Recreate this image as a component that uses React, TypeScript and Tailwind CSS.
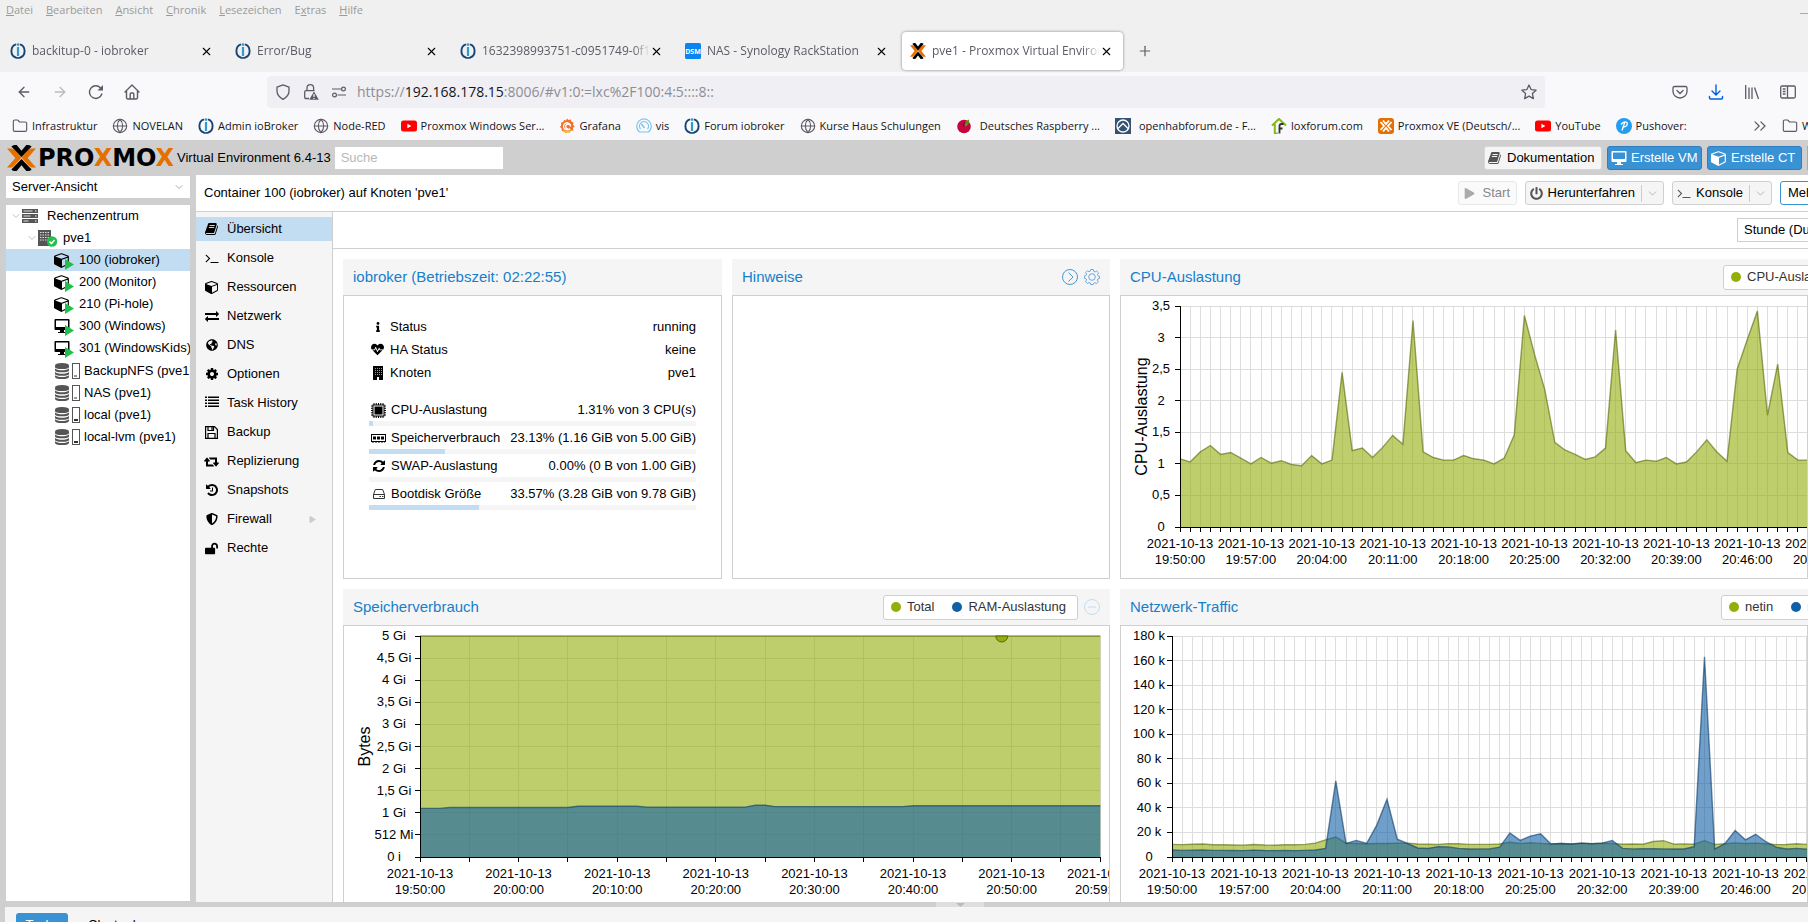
import type { ReactNode } from 'react';
import { ArrowLeft, ArrowRight, ChevronDown, ChevronsRight, Folder, Globe, Plus, X } from 'lucide-react';
import { FaGlobeAmericas, FaHeartbeat, FaInfo, FaLockOpen, FaPlay, FaPowerOff, FaShieldAlt } from 'react-icons/fa';

/* ---------- icons ---------- */

const FaGlyph = ({ d, size = 14, box = '0 0 1792 1792', className }: { d: string; size?: number; box?: string; className?: string }) => (
  <svg width={size} height={size} viewBox={box} fill="currentColor" className={className}>
    <path d={d} />
  </svg>
);

const CUBE =
  'M896 1629l640-349v-636l-640 233v752zm-64-865l698-254-698-254-698 254zm832-252v768q0 35-18 65t-49 47l-704 384q-28 16-61 16t-61-16l-704-384q-31-17-49-47t-18-65v-768q0-40 23-73t61-47l704-256q22-8 44-8t44 8l704 256q38 14 61 47t23 73z';
const BOOK =
  'M1639 478q40 57 18 129l-275 906q-19 64-76.5 107.5t-122.5 43.5h-923q-77 0-148.5-53.5t-99.5-131.5q-24-67-2-127 0-4 3-27t4-37q1-8-3-21.5t-3-19.5q2-11 8-21t16.5-23.5 16.5-23.5q23-38 45-91.5t30-91.5q3-10 .5-30t-.5-28q3-11 17-28t17-23q21-36 42-92t25-90q1-9-2.5-32t.5-28q4-13 22-30.5t22-22.5q19-26 42.5-84.5t27.5-96.5q1-8-3-25.5t-2-26.5q2-8 9-18t18-23 17-21q8-12 16.5-30.5t15-35 16-36 19.5-32 26.5-23.5 36-11.5 47.5 5.5l-1 3q38-9 51-9h761q74 0 114 56t18 130l-274 906q-36 119-71.5 153.5t-128.5 34.5h-869q-27 0-38 15-11 16-1 43 24 70 144 70h923q29 0 56-15.5t35-41.5l300-987q7-22 5-57 38 15 59 43zm-1064 2q-4 13 2 22.5t20 9.5h608q13 0 25.5-9.5t16.5-22.5l21-64q4-13-2-22.5t-20-9.5h-608q-13 0-25.5 9.5t-16.5 22.5zm-83 256q-4 13 2 22.5t20 9.5h608q13 0 25.5-9.5t16.5-22.5l21-64q4-13-2-22.5t-20-9.5h-608q-13 0-25.5 9.5t-16.5 22.5z';
const TERMINAL =
  'M649 983l-466 466q-10 10-23 10t-23-10l-50-50q-10-10-10-23t10-23l393-393-393-393q-10-10-10-23t10-23l50-50q10-10 23-10t23 10l466 466q10 10 10 23t-10 23zm1079 457v64q0 14-9 23t-23 9h-960q-14 0-23-9t-9-23v-64q0-14 9-23t23-9h960q14 0 23 9t9 23z';
const EXCHANGE =
  'M1792 1184v192q0 13-9.5 22.5t-22.5 9.5h-1376v192q0 13-9.5 22.5t-22.5 9.5q-12 0-24-10l-319-320q-9-9-9-22 0-14 9-23l320-320q9-9 23-9 13 0 22.5 9.5t9.5 22.5v192h1376q13 0 22.5 9.5t9.5 22.5zm0-544q0 14-9 23l-320 320q-9 9-23 9-13 0-22.5-9.5t-9.5-22.5v-192h-1376q-13 0-22.5-9.5t-9.5-22.5v-192q0-13 9.5-22.5t22.5-9.5h1376v-192q0-14 9-23t23-9q12 0 24 10l319 319q9 9 9 23z';
const LIST =
  'M0 1216h256v192h-256zM0 832h256v192h-256zM384 1216h1408v192h-1408zM0 448h256v192h-256zM384 832h1408v192h-1408zM0 64h256v192h-256zM384 448h1408v192h-1408zM384 64h1408v192h-1408z';
const COG =
  'M1152 896q0-106-75-181t-181-75-181 75-75 181 75 181 181 75 181-75 75-181zm512-109v222q0 12-8 23t-20 13l-185 28q-19 54-39 91 35 50 107 138 10 12 10 25t-9 23q-27 37-99 108t-94 71q-12 0-26-9l-138-108q-44 23-91 38-16 136-29 186-7 28-36 28h-222q-14 0-24.5-8.5t-11.5-21.5l-28-184q-49-16-90-37l-141 107q-10 9-25 9-14 0-25-11-126-114-165-168-7-10-7-23 0-12 8-23 15-21 51-66.5t54-70.5q-27-50-41-99l-183-27q-13-2-21-12.5t-8-23.5v-222q0-12 8-23t19-13l186-28q14-46 39-92-40-57-107-138-10-12-10-24 0-10 9-23 26-36 98.5-107.5t94.5-71.5q13 0 26 10l138 107q44-23 91-38 16-136 29-186 7-28 36-28h222q14 0 24.5 8.5t11.5 21.5l28 184q49 16 90 37l142-107q9-9 24-9 13 0 25 10 129 119 165 170 7 8 7 22 0 12-8 23-15 21-51 66.5t-54 70.5q26 50 41 98l183 28q13 2 21 12.5t8 23.5z';
const HISTORY =
  'M1664 896q0 156-61 298t-164 245-245 164-298 61q-172 0-327-72.5t-264-204.5q-7-10-6.5-22.5t8.5-20.5l137-138q10-9 25-9 16 2 23 12 73 95 179 147t225 52q104 0 198.5-40.5t163.5-109.5 109.5-163.5 40.5-198.5-40.5-198.5-109.5-163.5-163.5-109.5-198.5-40.5q-98 0-188 35.5t-160 101.5l137 138q31 30 14 69-17 40-59 40h-448q-26 0-45-19t-19-45v-448q0-42 40-59 39-17 69 14l130 129q107-101 244.5-156.5t284.5-55.5q156 0 298 61t245 164 164 245 61 298zm-640-288v448q0 14-9 23t-23 9h-320q-14 0-23-9t-9-23v-64q0-14 9-23t23-9h224v-352q0-14 9-23t23-9h64q14 0 23 9t9 23z';
const REFRESH =
  'M1639 1056q0 5-1 7-64 268-268 434.5t-478 166.5q-146 0-282.5-55t-243.5-157l-129 129q-19 19-45 19t-45-19-19-45v-448q0-26 19-45t45-19h448q26 0 45 19t19 45-19 45l-137 137q71 66 161 102t187 36q134 0 250-65t186-179q11-17 53-117 8-23 30-23h192q13 0 22.5 9.5t9.5 22.5zm25-800v448q0 26-19 45t-45 19h-448q-26 0-45-19t-19-45 19-45l138-138q-148-137-349-137-134 0-250 65t-186 179q-11 17-53 117-8 23-30 23h-199q-13 0-22.5-9.5t-9.5-22.5v-7q65-268 270-434.5t480-166.5q146 0 284 55.5t245 156.5l130-129q19-19 45-19t45 19 19 45z';
const RETWEET =
  'M1280 1504q0 13-9.5 22.5t-22.5 9.5h-960q-8 0-13.5-2t-9-7-5.5-8-3-11.5-1-11.5v-600h-192q-26 0-45-19t-19-45q0-24 15-41l320-384q19-22 49-22t49 22l320 384q15 17 15 41 0 26-19 45t-45 19h-192v384h576q16 0 25 11l160 192q7 10 7 21zm640-416q0 24-15 41l-320 384q-20 23-49 23t-49-23l-320-384q-15-17-15-41 0-26 19-45t45-19h192v-384h-576q-16 0-25-12l-160-192q-7-9-7-20 0-13 9.5-22.5t22.5-9.5h960q8 0 13.5 2t9 7 5.5 8 3 11.5 1 11.5v600h192q26 0 45 19t19 45z';

const IoBrokerIcon = () => (
  <svg width="16" height="16" viewBox="0 0 16 16" fill="none">
    <path d="M6 1.4A6.500 6.900 0 0 0 6 14.600M10 1.4A6.500 6.900 0 0 1 10 14.600" stroke="#174475" strokeWidth="1.900" />
    <path d="M5.500 14.500Q8 15.500 10.500 14.500" stroke="#174475" strokeWidth="1.500" />
    <path d="M8 4V13" stroke="#3399cc" strokeWidth="2.200" />
    <circle cx="8" cy="1.600" r="1.400" fill="#3399cc" />
  </svg>
);

const DsmIcon = () => (
  <svg width="16" height="16" viewBox="0 0 16 16">
    <rect width="16" height="16" rx="1.5" fill="#0a84f0" />
    <text x="8" y="11" textAnchor="middle" fontSize="7" fontWeight="700" fill="#fff">
      DSM
    </text>
  </svg>
);

const ProxmoxMark = ({ width = 16, height = 16 }: { width?: number; height?: number }) => (
  <svg width={width} height={height} viewBox="0 0 30 26" preserveAspectRatio="none">
    <path d="M0 3.5h5l3 1.5 7 7.6-7 7.6-3 2.3H0l8.6-9.5z" fill="#e57000" />
    <path d="M30 3.5h-5l-3 1.5-7 7.6 7 7.6 3 2.3h5l-8.6-9.5z" fill="#e57000" />
    <path d="M4.5 1.5Q6 0 8 0h2l5 5.7L20 0h2q2 0 3.500 1.500L15 12z" fill="#000" />
    <path d="M4.500 24.500Q6 26 8 26h2l5-5.700L20 26h2q2 0 3.500-1.500L15 14z" fill="#000" />
  </svg>
);

const ProxmoxTile = () => (
  <svg width="16" height="16" viewBox="0 0 16 16">
    <rect width="16" height="16" rx="3" fill="#e57000" />
    <path d="M5 2.500l3 3.500 3-3.500M5 13.500L8 10l3 3.500M2.500 4L6 8l-3.500 4M13.500 4L10 8l3.500 4" fill="none" stroke="#fff" strokeWidth="1.800" />
  </svg>
);

const YouTubeIcon = () => (
  <svg width="16" height="16" viewBox="0 0 16 16">
    <rect y="2.500" width="16" height="11" rx="2.500" fill="#f00" />
    <path d="M6.400 5.700v4.600l4-2.300z" fill="#fff" />
  </svg>
);

const GrafanaIcon = () => (
  <svg width="16" height="16" viewBox="0 0 16 16">
    <path
      d="M8 .5l1.500 1.600 2.300-.7.500 2.200 2.300.800-.6 2.200L15.500 8.500l-1.500 1.600.2 2.300-2.200.4-1.300 2-2.100-.8-2.200 1.100-1.400-1.800-2.300-.3.100-2.300L1 9l1.300-1.900L1.900 4.800l2.200-.7.900-2.200 2 .5z"
      fill="#f2722b"
    />
    <path d="M11.500 7.200A3.600 3.600 0 1 0 11 10.500M11.500 8.500A2.400 2.400 0 1 0 9 11" fill="none" stroke="#fff" strokeWidth="1.300" />
    <path d="M4 12.500q4 3.500 8-.5" fill="none" stroke="#fbc02d" strokeWidth="1.500" />
  </svg>
);

const VisIcon = () => (
  <svg width="16" height="16" viewBox="0 0 16 16" fill="none" stroke="#7fc4ee">
    <path d="M3.500 14A7.300 7.300 0 1 1 12.500 14z" strokeWidth="1.200" />
    <path d="M4.500 11A4.500 4.500 0 1 1 11.500 11" strokeWidth="1.200" />
    <path d="M5.500 6l3 4" strokeWidth="1.600" />
  </svg>
);

const RaspberryIcon = () => (
  <svg width="16" height="16" viewBox="0 0 16 16">
    <circle cx="8" cy="8.500" r="6.800" fill="#c7053d" />
    <path d="M9 9Q7 3.500 13 1.500 14 6.500 9 9z" fill="#5a8f1e" />
    <path d="M8 9q-1-3 1-5" stroke="#5f0420" fill="none" />
  </svg>
);

const OpenhabIcon = () => (
  <svg width="16" height="16" viewBox="0 0 16 16" fill="none">
    <rect width="16" height="16" fill="#35526f" />
    <circle cx="8" cy="8" r="6" stroke="#fff" strokeWidth="1.300" />
    <path d="M3 10.500L8 5.500l5 5" stroke="#fff" strokeWidth="1.300" />
  </svg>
);

const LoxIcon = () => (
  <svg width="16" height="16" viewBox="0 0 16 16" fill="none">
    <path d="M1 7.500L8 1l7 6.500M3.800 6v9.500h3" stroke="#83b81a" strokeWidth="2" />
    <path d="M8.500 15.500V8q0-2 2-2h2M7.500 10.500h4" stroke="#333" strokeWidth="1.800" />
  </svg>
);

const PushoverIcon = () => (
  <svg width="16" height="16" viewBox="0 0 16 16" fill="none">
    <circle cx="8" cy="8" r="8" fill="#249df1" />
    <path d="M8.800 4L6 12.500M5 6.500q3-4 6-2 1.500 3.500-3.700 4.700" stroke="#fff" strokeWidth="1.300" />
  </svg>
);

const FolderIcon = () => <Folder size={16} strokeWidth={1.7} className="text-[#5b5b66]" />;
const GlobeIcon = () => <Globe size={16} strokeWidth={1.7} className="text-[#5b5b66]" />;

const ReloadIcon = () => (
  <svg width="16" height="16" viewBox="0 0 16 16" fill="none" stroke="currentColor" strokeWidth="1.400">
    <path d="M13.800 10A6.300 6.300 0 1 1 12.300 3.700L13.500 5" strokeLinecap="round" />
    <path d="M15 1v5.500H9.500z" fill="currentColor" stroke="none" />
  </svg>
);

const HomeIcon = () => (
  <svg width="16" height="16" viewBox="0 0 16 16" fill="none" stroke="currentColor" strokeWidth="1.400" strokeLinejoin="round">
    <path d="M1 8L8 1l7 7M2.500 7v6.500q0 1.500 1.500 1.500h8q1.500 0 1.500-1.500V7" strokeLinecap="round" />
    <path d="M6.200 15v-5q0-1 1-1h1.600q1 0 1 1v5" />
  </svg>
);

const ShieldIcon = () => (
  <svg width="16" height="16" viewBox="0 0 16 16" fill="none" stroke="currentColor" strokeWidth="1.300">
    <path d="M8 .8l6 2.300v4q0 5-6 8.300-6-3.300-6-8.300v-4z" strokeLinejoin="round" />
  </svg>
);

const LockWarnIcon = () => (
  <svg width="16" height="16" viewBox="0 0 16 16" fill="none" stroke="currentColor" strokeWidth="1.300">
    <path d="M4 6.500V4a3.300 3.300 0 0 1 6.600 0v2.500M6 14.500H3q-1.300 0-1.300-1.300V8q0-1.300 1.300-1.300h8.500" />
    <path d="M11 7.500l4.800 8.300H6.200z" fill="currentColor" stroke="none" />
    <path d="M11 10v3M11 14v1" stroke="#f0f0f4" />
  </svg>
);

const PermissionIcon = () => (
  <svg width="16" height="16" viewBox="0 0 16 16" fill="none" stroke="currentColor" strokeWidth="1.200">
    <circle cx="12.500" cy="5" r="1.900" />
    <path d="M1 5h9M6.500 11H15" />
    <circle cx="3.500" cy="11" r="1.900" />
  </svg>
);

const StarIcon = () => (
  <svg width="16" height="16" viewBox="0 0 16 16" fill="none" stroke="currentColor" strokeWidth="1.300" strokeLinejoin="round">
    <path d="M8 1l2.100 4.600 5 .6-3.700 3.400 1 5L8 12.100l-4.400 2.500 1-5L.9 6.200l5-.6z" />
  </svg>
);

const PocketIcon = () => (
  <svg width="16" height="16" viewBox="0 0 16 16" fill="none" stroke="currentColor" strokeWidth="1.300" strokeLinecap="round">
    <path d="M2.500 2.500h11q1.500 0 1.500 1.500v3.500a7 6.500 0 0 1-14 0V4q0-1.500 1.500-1.500z" />
    <path d="M5 6.500l3 3 3-3" />
  </svg>
);

const DownloadIcon = () => (
  <svg width="16" height="16" viewBox="0 0 16 16" fill="none" stroke="#0061e0" strokeWidth="1.400" strokeLinecap="round">
    <path d="M8 1v9.500M4 7l4 4 4-4M1.500 12.500V14q0 1 1 1h11q1 0 1-1v-1.500" />
  </svg>
);

const LibraryIcon = () => (
  <svg width="16" height="16" viewBox="0 0 16 16" fill="none" stroke="currentColor" strokeWidth="1.300">
    <path d="M1.700 1v14M5 3.500V15M8 3.500V15M10.500 3.500L14.500 15" />
  </svg>
);

const SidebarIcon = () => (
  <svg width="16" height="16" viewBox="0 0 16 16" fill="none" stroke="currentColor" strokeWidth="1.300">
    <rect x=".7" y="2" width="14.600" height="12" rx="1.500" />
    <path d="M7.500 2v12M2.800 5H5.500M2.800 7.500H5.500M2.800 10H5.500" />
  </svg>
);

const MonitorGlyph = ({ size = 16 }: { size?: number }) => (
  <svg width={size} height={size} viewBox="0 0 16 16" fill="currentColor">
    <path d="M1.500 1h13q1 0 1 1v9q0 1-1 1h-13q-1 0-1-1V2q0-1 1-1zM2 2.500v6.500h12V2.500z" fillRule="evenodd" />
    <path d="M6 12h4v2h2v1H4v-1h2z" />
  </svg>
);

const CpuIcon = () => (
  <svg width="15" height="15" viewBox="0 0 15 15">
    <path d="M3 0v15M5.250 0v15M7.500 0v15M9.750 0v15M12 0v15M0 3h15M0 5.250h15M0 7.500h15M0 9.750h15M0 12h15" stroke="#000" />
    <rect x="1.500" y="1.500" width="12" height="12" fill="#000" />
    <rect x="3" y="3" width="9" height="9" fill="none" stroke="#fff" />
  </svg>
);

const MemoryIcon = () => (
  <svg width="15" height="15" viewBox="0 0 15 15">
    <rect x=".5" y="3.500" width="14" height="7" fill="none" stroke="#000" />
    <path d="M2 5.500h3v3H2zM6 5.500h3v3H6zM10 5.500h3v3h-3z" />
    <path d="M1 11h13" stroke="#000" strokeDasharray="2 1" />
  </svg>
);

const BuildingIcon = () => (
  <svg width="12" height="14" viewBox="0 0 12 14">
    <path d="M1 0h10v14H1z" />
    <path d="M3 2.500h7M3 4.500h7M3 6.500h7M3 8.500h7" stroke="#999" strokeDasharray="1 1" />
    <path d="M5 11h2v3H5z" fill="#fff" />
  </svg>
);

const DiskIcon = () => (
  <svg width="12" height="12" viewBox="0 0 12 12" fill="none" stroke="#333">
    <path d="M.5 6.500L2.300 1.500h7.400l1.800 5v4H.5zM.5 6.500h11" />
    <path d="M6.500 8.500h1.500M9 8.500h1.500" />
  </svg>
);

const FloppyIcon = () => (
  <svg width="13" height="13" viewBox="0 0 13 13" fill="none" stroke="#000" strokeWidth="1.200">
    <path d="M.6.600h8.900l2.900 2.900v8.900H.6z" />
    <path d="M3 .6v3.900h5.500V.6M3 12.400V7.500h7v4.900" />
    <path d="M7 1v3" />
  </svg>
);

const ServerIcon = () => (
  <svg width="16" height="14" viewBox="0 0 16 14">
    <path d="M0 0h16v4H0zM0 5h16v4H0zM0 10h16v4H0z" fill="#555" />
    <path d="M1.500 2h9M1.500 7h7M1.500 12h5" stroke="#ddd" />
    <path d="M13 2h1.500M13 7h1.500M13 12h1.500" stroke="#fff" />
  </svg>
);

const NodeIcon = () => (
  <svg width="19" height="17" viewBox="0 0 19 17">
    <path d="M0 0h13v16H0z" fill="#555" />
    <path d="M2 2.500h9M2 5h9M2 7.500h9M2 10h9" stroke="#ddd" strokeDasharray="1.500 1" />
    <circle cx="14" cy="11.500" r="5.200" fill="#21bf4b" />
    <path d="M11.500 11.500l2 2 3-3.500" stroke="#fff" strokeWidth="1.600" fill="none" />
  </svg>
);

const RunningBadge = () => (
  <svg width="9" height="11" viewBox="0 0 9 11" className="absolute -right-1 bottom-[-2px]">
    <path d="M0 0l9 5.500L0 11z" fill="#21bf4b" />
  </svg>
);

const StorageIcon = ({ used }: { used?: boolean }) => (
  <svg width="25" height="16" viewBox="0 0 25 16">
    <path d="M0 2.500Q0 0 7 0t7 2.500V4Q14 6 7 6T0 4z" fill="#555" />
    <path d="M0 5.500q2 1.800 7 1.800t7-1.800v1.800q0 2-7 2t-7-2zM0 9q2 1.800 7 1.800T14 9v1.800q0 2-7 2t-7-2zM0 12.300q2 1.800 7 1.800t7-1.800v1.400q0 2.300-7 2.300t-7-2.300z" fill="#555" />
    <rect x="17.500" y=".5" width="7" height="15" fill="none" stroke="#555" />
    <path d={used ? 'M19 12h4v2h-4z' : 'M19 12.500h3v1h-3z'} fill="#333" />
  </svg>
);

/* ---------- browser chrome ---------- */

const browserTabs = [
  { icon: <IoBrokerIcon />, title: 'backitup-0 - iobroker' },
  { icon: <IoBrokerIcon />, title: 'Error/Bug' },
  { icon: <IoBrokerIcon />, title: '1632398993751-c0951749-0f18-4' },
  { icon: <DsmIcon />, title: 'NAS - Synology RackStation' },
  { icon: <ProxmoxMark />, title: 'pve1 - Proxmox Virtual Environment', active: true },
];

const bookmarks = [
  { icon: <FolderIcon />, title: 'Infrastruktur' },
  { icon: <GlobeIcon />, title: 'NOVELAN' },
  { icon: <IoBrokerIcon />, title: 'Admin ioBroker' },
  { icon: <GlobeIcon />, title: 'Node-RED' },
  { icon: <YouTubeIcon />, title: 'Proxmox Windows Ser...' },
  { icon: <GrafanaIcon />, title: 'Grafana' },
  { icon: <VisIcon />, title: 'vis' },
  { icon: <IoBrokerIcon />, title: 'Forum iobroker' },
  { icon: <GlobeIcon />, title: 'Kurse Haus Schulungen' },
  { icon: <RaspberryIcon />, title: 'Deutsches Raspberry ...', wide: true },
  { icon: <OpenhabIcon />, title: 'openhabforum.de - F...', wide: true },
  { icon: <LoxIcon />, title: 'loxforum.com' },
  { icon: <ProxmoxTile />, title: 'Proxmox VE (Deutsch/...' },
  { icon: <YouTubeIcon />, title: 'YouTube' },
  { icon: <PushoverIcon />, title: 'Pushover:' },
];

const menus = [
  ['', 'D', 'atei'],
  ['', 'B', 'earbeiten'],
  ['', 'A', 'nsicht'],
  ['', 'C', 'hronik'],
  ['', 'L', 'esezeichen'],
  ['E', 'x', 'tras'],
  ['', 'H', 'ilfe'],
];

const BrowserChrome = () => (
  <header className="shrink-0 font-['Open_Sans',sans-serif] text-[11px] text-[#15141a]">
    <div className="flex h-[72px] flex-col bg-[#f0f0f0]">
      <nav className="flex h-[20px] items-center gap-[13px] pl-[6px] text-[#9a9a9a]">
        {menus.map(([pre, key, rest]) => (
          <button key={rest}>
            {pre}
            <u>{key}</u>
            {rest}
          </button>
        ))}
        <span className="ml-auto mt-[6px] h-px w-2 bg-[#aaa]" />
      </nav>
      <div className="flex flex-1 items-center pt-[10px]">
        {browserTabs.map((tab) => (
          <div
            key={tab.title}
            className={
              tab.active
                ? 'mx-[2px] flex h-[38px] w-[221px] items-center rounded-[4px] bg-white pl-2 pr-[10px] text-[#5b5b66] shadow-[0_0_3px_rgba(80,80,110,0.7)]'
                : 'flex h-[38px] w-[225px] items-center pl-[10px] pr-3 text-[#5b5b66]'
            }
          >
            <span className="shrink-0">{tab.icon}</span>
            <span className="ml-[6px] flex-1 overflow-hidden whitespace-nowrap text-[12px] [mask-image:linear-gradient(to_right,black_90%,transparent)]">
              {tab.title}
            </span>
            <button aria-label="Tab schließen" className="text-black">
              <X size={13} strokeWidth={2} />
            </button>
          </div>
        ))}
        <button aria-label="Neuer Tab" className="ml-3 text-[#5b5b66]">
          <Plus size={16} strokeWidth={1.8} />
        </button>
      </div>
    </div>
    <div className="flex h-[40px] items-center bg-[#f9f9fb] pl-4 text-[#5b5b66]">
      <div className="flex w-[251px] gap-5">
        <button aria-label="Zurück">
          <ArrowLeft size={16} strokeWidth={2} />
        </button>
        <button aria-label="Vor" className="opacity-40">
          <ArrowRight size={16} strokeWidth={2} />
        </button>
        <button aria-label="Neu laden">
          <ReloadIcon />
        </button>
        <button aria-label="Startseite">
          <HomeIcon />
        </button>
      </div>
      <div className="flex h-8 flex-1 items-center gap-3 rounded-[4px] bg-[#f0f0f4] pl-2 pr-2">
        <ShieldIcon />
        <LockWarnIcon />
        <PermissionIcon />
        <div className="-ml-[2px] flex-1 text-[14px] text-[#8d8d95]">
          https://<span className="text-[#15141a]">192.168.178.15</span>:8006/#v1:0:=lxc%2F100:4:5::::8::
        </div>
        <button aria-label="Lesezeichen hinzufügen">
          <StarIcon />
        </button>
      </div>
      <div className="flex w-[263px] justify-end gap-5 pr-3">
        <button aria-label="Pocket">
          <PocketIcon />
        </button>
        <button aria-label="Downloads">
          <DownloadIcon />
        </button>
        <button aria-label="Bibliothek">
          <LibraryIcon />
        </button>
        <button aria-label="Sidebar">
          <SidebarIcon />
        </button>
      </div>
    </div>
    <div className="flex h-[28px] items-center overflow-hidden whitespace-nowrap bg-[#f9f9fb] pl-3">
      <nav className="flex gap-[15px]">
        {bookmarks.map((b) => (
          <a key={b.title} href="#" className={b.wide ? 'flex items-center gap-2' : 'flex items-center gap-1'}>
            {b.icon}
            {b.title}
          </a>
        ))}
      </nav>
      <ChevronsRight size={20} strokeWidth={1.5} className="ml-auto shrink-0 text-[#5b5b66]" />
      <a href="#" className="ml-3 flex w-[26px] items-center gap-1 overflow-hidden">
        <Folder size={16} strokeWidth={1.7} className="shrink-0 text-[#5b5b66]" />
        Web
      </a>
    </div>
  </header>
);

/* ---------- proxmox header and tree ---------- */

const TopBar = () => (
  <div className="flex h-[35px] shrink-0 items-center overflow-hidden bg-[#cfcfcf] pl-[7px]">
    <ProxmoxMark width={29} height={26} />
    <span className="ml-[2px] w-[138px] font-['DejaVu_Sans',sans-serif] text-[24px] font-bold leading-none text-black">
      PRO<span className="text-[#e57000]">X</span>MO<span className="text-[#e57000]">X</span>
    </span>
    <span className="whitespace-nowrap pl-[1px]">Virtual Environment 6.4-13</span>
    <input
      aria-label="Suche"
      placeholder="Suche"
      className="ml-1 h-[22px] w-[168px] bg-white px-[6px] outline-none placeholder:text-[#b8b8b8]"
    />
    <div className="ml-auto flex shrink-0 gap-[5px]">
      <button className="flex h-6 w-[118px] items-center gap-[5px] rounded-[3px] border border-[#d8d8d8] bg-[#f5f5f5] pl-[3px]">
        <FaGlyph d={BOOK} className="text-[#555]" />
        Dokumentation
      </button>
      <button className="flex h-6 w-[95px] items-center gap-1 rounded-[3px] border border-[#2c7ec0] bg-[#3892d4] pl-[3px] text-white">
        <MonitorGlyph />
        Erstelle VM
      </button>
      <button className="flex h-6 w-[95px] items-center gap-1 rounded-[3px] border border-[#2c7ec0] bg-[#3892d4] pl-[3px] text-white">
        <FaGlyph d={CUBE} size={16} />
        Erstelle CT
      </button>
      <span className="h-6 w-px bg-[#aaa]" />
    </div>
  </div>
);

const guests = [
  { name: '100 (iobroker)', kind: 'lxc', selected: true },
  { name: '200 (Monitor)', kind: 'lxc' },
  { name: '210 (Pi-hole)', kind: 'lxc' },
  { name: '300 (Windows)', kind: 'qemu' },
  { name: '301 (WindowsKids)', kind: 'qemu' },
];

const storages = [
  { name: 'BackupNFS (pve1)' },
  { name: 'NAS (pve1)' },
  { name: 'local (pve1)', used: true },
  { name: 'local-lvm (pve1)', used: true },
];

const ResourceTree = () => (
  <aside className="flex w-[196px] shrink-0 flex-col bg-[#cfcfcf] pb-px pl-[6px] pr-[6px] pt-px">
    <div className="relative">
      <select aria-label="Ansicht" className="block h-[22px] w-full appearance-none bg-white px-[6px]">
        <option>Server-Ansicht</option>
      </select>
      <ChevronDown size={12} className="pointer-events-none absolute right-[5px] top-[5px] text-[#aaa]" />
    </div>
    <div className="mt-[7px] flex-1 overflow-hidden whitespace-nowrap bg-white">
      <ul>
        <li className="flex h-[22px] items-center pl-[4px]">
          <ChevronDown size={12} strokeWidth={1.5} className="text-[#aaa]" />
          <ServerIcon />
          <span className="pl-[9px]">Rechenzentrum</span>
        </li>
        <li className="flex h-[22px] items-center pl-5">
          <ChevronDown size={12} strokeWidth={1.5} className="text-[#aaa]" />
          <NodeIcon />
          <span className="pl-[6px]">pve1</span>
        </li>
        {guests.map((g) => (
          <li
            key={g.name}
            className={g.selected ? 'flex h-[22px] items-center bg-[#c2ddf2] pl-[48px]' : 'flex h-[22px] items-center pl-[48px]'}
          >
            <span className="relative mr-[9px] w-4">
              {g.kind === 'lxc' ? <FaGlyph d={CUBE} size={16} /> : <MonitorGlyph />}
              <RunningBadge />
            </span>
            {g.name}
          </li>
        ))}
      </ul>
      <ul className="flex flex-col pt-px">
        {storages.map((s) => (
          <li key={s.name} className="flex h-[22px] items-center gap-1 pl-[49px]">
            <span className="shrink-0">
              <StorageIcon used={s.used} />
            </span>
            {s.name}
          </li>
        ))}
      </ul>
    </div>
  </aside>
);

/* ---------- container view ---------- */

const navItems: { label: string; icon: ReactNode; more?: boolean }[] = [
  { label: 'Übersicht', icon: <FaGlyph d={BOOK} /> },
  { label: 'Konsole', icon: <FaGlyph d={TERMINAL} /> },
  { label: 'Ressourcen', icon: <FaGlyph d={CUBE} /> },
  { label: 'Netzwerk', icon: <FaGlyph d={EXCHANGE} /> },
  { label: 'DNS', icon: <FaGlobeAmericas size={12} /> },
  { label: 'Optionen', icon: <FaGlyph d={COG} /> },
  { label: 'Task History', icon: <FaGlyph d={LIST} /> },
  { label: 'Backup', icon: <FloppyIcon /> },
  { label: 'Replizierung', icon: <FaGlyph d={RETWEET} size={15} box="0 0 1920 1792" /> },
  { label: 'Snapshots', icon: <FaGlyph d={HISTORY} /> },
  { label: 'Firewall', icon: <FaShieldAlt size={12} />, more: true },
  { label: 'Rechte', icon: <FaLockOpen size={13} /> },
];

const SideNav = () => (
  <nav className="flex w-[137px] shrink-0 flex-col gap-[5px] border-r border-[#cfcfcf] bg-[#f5f5f5] pt-[5px]">
    {navItems.map((item, i) => (
      <a
        key={item.label}
        href="#"
        className={i === 0 ? 'flex h-6 items-center bg-[#c2ddf2] pl-2' : 'flex h-6 items-center pl-2'}
      >
        <span className="mr-2 flex w-[15px] justify-center">{item.icon}</span>
        {item.label}
        {item.more && <FaPlay size={7} className="ml-auto mr-4 text-[#ccc]" />}
      </a>
    ))}
  </nav>
);

const SplitButton = ({ icon, label }: { icon: ReactNode; label: string }) => (
  <div className="flex h-6 items-center rounded-[3px] border border-[#d0d0d0] bg-[#f5f5f5]">
    <button className="flex items-center gap-[5px] pl-1 pr-[6px]">
      {icon}
      {label}
    </button>
    <button aria-label={label + ' Menü'} className="border-l border-[#ccc] px-[4px] py-[2px]">
      <ChevronDown size={13} strokeWidth={1.5} className="text-[#aaa]" />
    </button>
  </div>
);

const ActionBar = () => (
  <div className="flex h-[37px] shrink-0 items-center border-b border-[#cfcfcf] pl-2">
    <h1 className="whitespace-nowrap">Container 100 (iobroker) auf Knoten 'pve1'</h1>
    <div className="ml-auto flex shrink-0 gap-2">
      <button disabled className="flex h-6 w-[59px] items-center gap-2 rounded-[3px] border border-[#e8e8e8] bg-[#fafafa] pl-[5px] text-[#888]">
        <FaPlay size={11} className="text-[#aaa]" />
        Start
      </button>
      <SplitButton icon={<FaPowerOff size={13} className="text-[#555]" />} label="Herunterfahren" />
      <SplitButton icon={<FaGlyph d={TERMINAL} className="text-[#555]" />} label="Konsole" />
      <div className="w-[28px] overflow-hidden">
        <button className="h-6 w-[66px] rounded-[3px] border border-[#3892d4] bg-white pl-[7px] text-left">Mehr</button>
      </div>
    </div>
  </div>
);

const Panel = ({ title, tools, children, className = '' }: { title: string; tools?: ReactNode; children?: ReactNode; className?: string }) => (
  <section className={'flex min-w-0 flex-col overflow-hidden ' + className}>
    <div className="flex h-9 shrink-0 items-center bg-[#f5f5f5] pl-[10px]">
      <h2 className="whitespace-nowrap text-[15px] text-[#157fcc]">{title}</h2>
      <div className="ml-auto flex items-center">{tools}</div>
    </div>
    <div className="h-[284px] shrink-0 border border-[#cfcfcf] bg-white">{children}</div>
  </section>
);

const Legend = ({ items }: { items: { label: string; color: string }[] }) => (
  <div className="flex h-[25px] w-max items-center gap-[18px] rounded-[3px] border border-[#cfcfcf] bg-white pl-[7px] pr-[11px] text-[#333]">
    {items.map((it) => (
      <span key={it.label} className="flex items-center gap-[6px]">
        <svg width="10" height="10">
          <circle cx="5" cy="5" r="5" fill={it.color} />
        </svg>
        {it.label}
      </span>
    ))}
  </div>
);

const infoRows = [
  { icon: <FaInfo size={10} />, label: 'Status', value: 'running' },
  { icon: <FaHeartbeat size={13} />, label: 'HA Status', value: 'keine' },
  { icon: <BuildingIcon />, label: 'Knoten', value: 'pve1' },
];

const usageRows = [
  { icon: <CpuIcon />, label: 'CPU-Auslastung', value: '1.31% von 3 CPU(s)', pct: 1.31 },
  { icon: <MemoryIcon />, label: 'Speicherverbrauch', value: '23.13% (1.16 GiB von 5.00 GiB)', pct: 23.13 },
  { icon: <FaGlyph d={REFRESH} />, label: 'SWAP-Auslastung', value: '0.00% (0 B von 1.00 GiB)', pct: 0 },
  { icon: <DiskIcon />, label: 'Bootdisk Größe', value: '33.57% (3.28 GiB von 9.78 GiB)', pct: 33.57 },
];

const StatusBody = () => (
  <dl className="whitespace-nowrap px-[25px] pt-[19px]">
    {infoRows.map((r) => (
      <div key={r.label} className="flex h-[23px] items-center">
        <dt className="flex flex-1 items-center gap-[5px] pl-[1px]">
          <span className="flex w-[15px] justify-center">{r.icon}</span>
          {r.label}
        </dt>
        <dd>{r.value}</dd>
      </div>
    ))}
    <div className="pt-[15px]">
      {usageRows.map((r) => (
        <div key={r.label} className="h-7">
          <div className="flex h-[22px] items-center">
            <dt className="flex flex-1 items-center gap-[5px] pl-[2px]">
              <span className="flex w-[15px] justify-center">{r.icon}</span>
              {r.label}
            </dt>
            <dd>{r.value}</dd>
          </div>
          <div className="h-[5px] bg-[#f5f5f5]">
            <div className="h-full bg-[#c2ddf2]" style={{ width: `${r.pct}%` }} />
          </div>
        </div>
      ))}
    </div>
  </dl>
);

/* ---------- charts ---------- */

type Series = { color: string; stroke: string; values: number[] };

type ChartProps = {
  left: number;
  step: number;
  labelX: number;
  titleX: number;
  title?: string;
  yLabels: string[];
  max: number;
  gridEvery: number;
  labelEvery: number;
  series: Series[];
  markerAt?: number;
};

const MINUTES = 69;
const TOP = 10;
const BOTTOM = 231;

const timeLabel = (minute: number) => {
  const t = 19 * 60 + 50 + minute;
  return `${Math.floor(t / 60)}:${String(t % 60).padStart(2, '0')}:00`;
};

const marks = (every: number) => {
  const out: number[] = [];
  for (let m = 0; m < MINUTES; m += every) out.push(m);
  out.push(MINUTES);
  return out;
};

const TimeChart = ({ left, step, labelX, titleX, title, yLabels, max, gridEvery, labelEvery, series, markerAt }: ChartProps) => {
  const x = (m: number) => left + m * step;
  const y = (v: number) => BOTTOM - (v / max) * (BOTTOM - TOP);
  const rows = yLabels.length - 1;
  const right = x(MINUTES);
  return (
    <svg className="block h-[282px] w-full text-[13px]" role="img" aria-label={title ?? 'Diagramm'}>
      <g stroke="#ddd" shapeRendering="crispEdges">
        {yLabels.map((l, i) => {
          const gy = TOP + ((BOTTOM - TOP) * i) / rows;
          return <line key={l} x1={left} x2={right} y1={gy} y2={gy} />;
        })}
        {marks(gridEvery).map((m) => (
          <line key={m} x1={x(m)} x2={x(m)} y1={TOP} y2={BOTTOM} />
        ))}
      </g>
      {series.map((s) => {
        const line = s.values.map((v, m) => `${x(m).toFixed(1)},${y(v).toFixed(1)}`).join(' ');
        return (
          <g key={s.color}>
            <polygon points={`${left},${BOTTOM} ${line} ${right},${BOTTOM}`} fill={s.color} fillOpacity="0.6" />
            <polyline points={line} fill="none" stroke={s.stroke} strokeOpacity="0.6" strokeWidth="1.400" />
          </g>
        );
      })}
      {markerAt !== undefined && (
        <path d={`M${x(markerAt) - 6} ${TOP}a6 6 0 0 0 12 0z`} fill="#94ae0a" stroke="#566606" />
      )}
      <g stroke="#000" shapeRendering="crispEdges">
        <line x1={left} x2={left} y1={TOP} y2={BOTTOM} />
        <line x1={left} x2={right} y1={BOTTOM} y2={BOTTOM} />
        {yLabels.map((l, i) => {
          const gy = TOP + ((BOTTOM - TOP) * i) / rows;
          return <line key={l} x1={left - 5} x2={left} y1={gy} y2={gy} />;
        })}
        {marks(gridEvery).map((m) => (
          <line key={m} x1={x(m)} x2={x(m)} y1={BOTTOM} y2={BOTTOM + 5} />
        ))}
      </g>
      <g textAnchor="middle">
        {yLabels.map((l, i) => (
          <text key={l} x={labelX} y={TOP + ((BOTTOM - TOP) * i) / rows + 4}>
            {l}
          </text>
        ))}
        {marks(labelEvery).map((m) => (
          <text key={m} y="252">
            <tspan x={x(m)}>2021-10-13</tspan>
            <tspan x={x(m)} dy="16">
              {timeLabel(m)}
            </tspan>
          </text>
        ))}
        {title && (
          <text fontSize="16" transform={`translate(${titleX} ${(TOP + BOTTOM) / 2}) rotate(-90)`}>
            {title}
          </text>
        )}
      </g>
    </svg>
  );
};

const GREEN = { color: '#94ae0a', stroke: '#566606' };
const BLUE = { color: '#115fa6', stroke: '#0a3a66' };

const cpu = [
  1.08, 1.03, 1.19, 1.29, 1.15, 1.18, 1.09, 1.0, 1.1, 1.01, 1.05, 0.99, 0.97, 1.13, 1.0, 1.06, 2.45, 1.21, 1.25, 1.1,
  1.26, 1.45, 1.31, 3.27, 1.19, 1.1, 1.06, 1.06, 1.13, 1.08, 1.06, 1.0, 1.09, 1.46, 3.35, 2.73, 2.18, 1.34, 1.22, 1.15,
  1.07, 1.11, 1.25, 3.12, 1.21, 1.02, 1.06, 1.04, 1.1, 1.0, 1.03, 1.19, 1.38, 1.19, 1.04, 2.5, 2.97, 3.42, 1.77, 2.58,
  1.18, 1.06, 1.06, 1.05, 1.08, 1.1, 1.04, 1.02, 1.06, 1.05,
];

const memTotal = Array.from({ length: 70 }, () => 5);
const memUsed = Array.from({ length: 70 }, (_, m) => {
  if (m === 34 || m === 35) return 1.17;
  if (m >= 16 && m <= 22) return 1.15;
  if (m < 16) return m < 3 ? 1.1 : 1.12;
  if (m < 34) return 1.13;
  return m < 50 ? 1.14 : 1.16;
});

const netIn = [
  10.3, 10.1, 10.4, 10.6, 10, 10, 9.8, 9.7, 10.2, 9.8, 9.6, 10, 10, 10.3, 11.3, 14, 16.3, 11.2, 11, 10.8, 11, 11, 11.3,
  11.3, 10.6, 10.4, 10.2, 10.9, 10.8, 10.3, 10.3, 10.3, 10.6, 12, 11, 11.6, 11.1, 10.6, 11, 10.6, 11.2, 10.8, 11.2, 11,
  10.4, 10.6, 10.4, 12.6, 13.3, 10.5, 10.7, 10.4, 13.3, 10.3, 10.8, 11.5, 11, 11.3, 10.8, 10.1, 10.2, 10.8, 10.3, 10.2,
  10.4, 10.4, 10.3, 10.2, 10.3, 10.4,
];

const netOut = [
  5.7, 5.4, 5.6, 5.7, 5.4, 5.4, 5.3, 5.2, 5.6, 5.3, 5.2, 5.3, 5.2, 5.4, 5.7, 7, 62, 11, 13.5, 11, 26, 47, 14.5, 11, 7.3,
  6.9, 8.5, 8.2, 7, 6.5, 6.6, 6.6, 8, 19.6, 13.5, 17, 19, 10.6, 11, 10.6, 11.3, 10.8, 11.3, 13.5, 7, 6.6, 6.8, 6.8, 6.6,
  6.5, 6.5, 8.5, 163, 6.5, 11, 21.5, 14, 18.5, 12.5, 8, 6.5, 7, 6.4, 6.5, 6.6, 6.5, 6.6, 6.5, 6.4, 6.5,
];

const CpuChart = () => (
  <TimeChart
    left={59}
    step={10.13}
    labelX={40}
    titleX={26}
    title="CPU-Auslastung"
    yLabels={['3,5', '3', '2,5', '2', '1,5', '1', '0,5', '0']}
    max={3.5}
    gridEvery={1}
    labelEvery={7}
    series={[{ ...GREEN, values: cpu }]}
  />
);

const MemoryChart = () => (
  <TimeChart
    left={76}
    step={9.86}
    labelX={50}
    titleX={26}
    title="Bytes"
    yLabels={['5 Gi', '4,5 Gi', '4 Gi', '3,5 Gi', '3 Gi', '2,5 Gi', '2 Gi', '1,5 Gi', '1 Gi', '512 Mi', '0 i']}
    max={5}
    gridEvery={5}
    labelEvery={10}
    series={[
      { ...GREEN, values: memTotal },
      { ...BLUE, values: memUsed },
    ]}
    markerAt={59}
  />
);

const NetworkChart = () => (
  <TimeChart
    left={51}
    step={10.24}
    labelX={28}
    titleX={0}
    yLabels={['180 k', '160 k', '140 k', '120 k', '100 k', '80 k', '60 k', '40 k', '20 k', '0']}
    max={180}
    gridEvery={1}
    labelEvery={7}
    series={[
      { ...GREEN, values: netIn },
      { ...BLUE, values: netOut },
    ]}
  />
);

const HintTools = () => (
  <div className="flex gap-[6px] pr-[10px] text-[#6fa8dc]">
    <button aria-label="Ausklappen">
      <svg width="16" height="16" viewBox="0 0 16 16" fill="none" stroke="#4a97cf">
        <circle cx="8" cy="8" r="7.500" />
        <path d="M6.500 3.500L11 8l-4.500 4.500" />
      </svg>
    </button>
    <button aria-label="Bearbeiten">
      <svg width="16" height="16" viewBox="0 0 16 16" fill="none" stroke="#6fa8dc">
        <path d="M6.700.5h2.600l.4 1.900 1.300.6 1.700-1 1.800 1.800-1 1.700.5 1.300 1.500.4v2.200l-1.600.5-.5 1.300 1 1.700-1.800 1.800-1.700-1-1.300.5-.4 1.300H6.700l-.4-1.500-1.300-.5-1.700 1-1.800-1.800 1-1.700-.5-1.200-1.500-.5V6.900l1.600-.5.5-1.300-1-1.600L3.400 1.700 5 2.700l1.300-.5z" />
        <circle cx="8" cy="8" r="3.300" />
      </svg>
    </button>
  </div>
);

const Overview = () => (
  <div className="flex min-w-0 flex-1 flex-col">
    <div className="flex h-[37px] shrink-0 items-center justify-end border-b border-[#cfcfcf]">
      <div className="w-[71px] overflow-hidden">
        <select aria-label="Zeitraum" className="block h-6 w-[170px] appearance-none border border-[#cfcfcf] bg-white px-[6px]">
          <option>Stunde (Durchschnitt)</option>
        </select>
      </div>
    </div>
    <div className="grid grid-cols-[379fr_378fr_688fr] gap-[10px] pl-[10px] pt-[10px]">
      <Panel title="iobroker (Betriebszeit: 02:22:55)">
        <StatusBody />
      </Panel>
      <Panel title="Hinweise" tools={<HintTools />} />
      <Panel
        title="CPU-Auslastung"
        tools={
          <div className="w-[85px] overflow-hidden">
            <Legend items={[{ label: 'CPU-Auslastung', color: '#94ae0a' }]} />
          </div>
        }
      >
        <CpuChart />
      </Panel>
      <Panel
        className="col-span-2"
        title="Speicherverbrauch"
        tools={
          <div className="flex items-center gap-[6px] pr-[10px]">
            <Legend
              items={[
                { label: 'Total', color: '#94ae0a' },
                { label: 'RAM-Auslastung', color: '#115fa6' },
              ]}
            />
            <svg width="16" height="16" viewBox="0 0 16 16" fill="none" stroke="#c2ddf2">
              <circle cx="8" cy="8" r="7.500" />
              <path d="M4 8h8" />
            </svg>
          </div>
        }
      >
        <MemoryChart />
      </Panel>
      <Panel
        title="Netzwerk-Traffic"
        tools={
          <div className="w-[87px] overflow-hidden">
            <Legend
              items={[
                { label: 'netin', color: '#94ae0a' },
                { label: 'netout', color: '#115fa6' },
              ]}
            />
          </div>
        }
      >
        <NetworkChart />
      </Panel>
    </div>
  </div>
);

const TaskLog = () => (
  <footer className="h-[20px] shrink-0 overflow-hidden bg-[#cfcfcf]">
    <div className="flex h-[5px] justify-center pl-[112px]">
      <button aria-label="Log einklappen" className="flex w-12 items-center justify-center bg-[#dedede]">
        <svg width="9" height="4">
          <path d="M0 0h9L4.500 4z" fill="#bbb" />
        </svg>
      </button>
    </div>
    <div className="ml-[5px] flex gap-2 bg-[#f5f5f5] pl-[11px] pt-[6px]">
      <button className="h-6 w-[52px] rounded-t-[3px] bg-[#3892d4] text-white">Tasks</button>
      <button className="h-6 px-3">Cluster log</button>
    </div>
  </footer>
);

const App = () => {
  return (
    <div className="flex h-screen flex-col overflow-hidden bg-white font-['Liberation_Sans',Arial,sans-serif] text-[13px] leading-4 text-black">
      <BrowserChrome />
      <TopBar />
      <div className="flex min-h-0 flex-1">
        <ResourceTree />
        <main className="flex min-w-0 flex-1 flex-col">
          <ActionBar />
          <div className="flex min-h-0 flex-1 overflow-hidden">
            <SideNav />
            <Overview />
          </div>
        </main>
      </div>
      <TaskLog />
    </div>
  );
};

export default App;
